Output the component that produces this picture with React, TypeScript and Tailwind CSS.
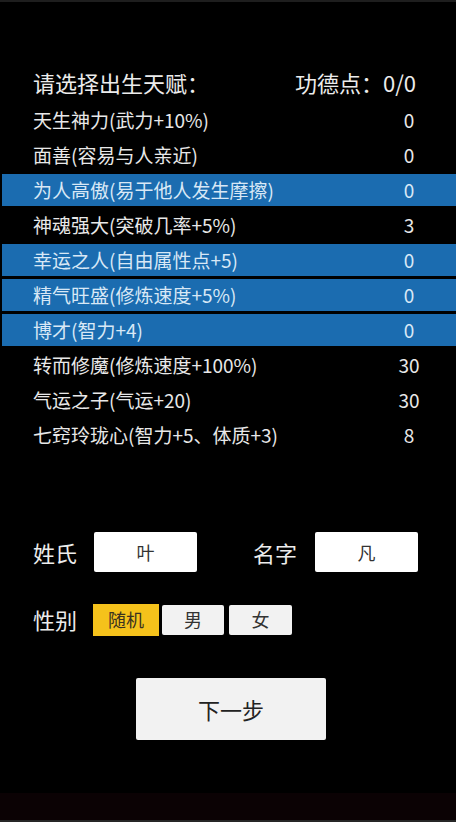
import { useState } from 'react';

// 出生天赋选择界面

const talents = [
  { name: '天生神力(武力+10%)', cost: 0, selected: false },
  { name: '面善(容易与人亲近)', cost: 0, selected: false },
  { name: '为人高傲(易于他人发生摩擦)', cost: 0, selected: true },
  { name: '神魂强大(突破几率+5%)', cost: 3, selected: false },
  { name: '幸运之人(自由属性点+5)', cost: 0, selected: true },
  { name: '精气旺盛(修炼速度+5%)', cost: 0, selected: true },
  { name: '博才(智力+4)', cost: 0, selected: true },
  { name: '转而修魔(修炼速度+100%)', cost: 30, selected: false },
  { name: '气运之子(气运+20)', cost: 30, selected: false },
  { name: '七窍玲珑心(智力+5、体质+3)', cost: 8, selected: false },
];

const font = { fontFamily: '"Noto Sans CJK SC", "Noto Sans", sans-serif' };

export default function App() {
  const [gender, setGender] = useState('随机');

  return (
    <div className="flex h-[822px] w-[456px] flex-col overflow-hidden bg-black" style={font}>
      <div className="h-[2px] bg-[#1e1e1e]" />

      {/* 标题 */}
      <div className="mt-[60px] flex h-[40px] items-center justify-between pl-[33px] pr-[40px] text-[22px] text-[#ececec]">
        <span>请选择出生天赋：</span>
        <span>功德点：0/0</span>
      </div>

      {/* 天赋列表 */}
      <div className="ml-[2px] flex flex-col">
        {talents.map((t) => (
          <div key={t.name} className="h-[35px] pt-[2px]">
            <div
              className={`flex h-[32px] items-center pl-[31px] pr-[22px] text-[19px] ${
                t.selected ? 'bg-[#1b6cb0] text-[#d8e8f6]' : 'text-[#e8e8e8]'
              }`}
            >
              <span className="flex-1">{t.name}</span>
              <span className="w-[50px] text-center">{t.cost}</span>
            </div>
          </div>
        ))}
      </div>

      {/* 姓名 */}
      <div className="mt-[80px] flex items-center pl-[33px]">
        <span className="w-[61px] text-[22px] text-[#ececec]">姓氏</span>
        <div className="flex h-[40px] w-[103px] items-center justify-center rounded-[2px] bg-white text-[18px] text-[#333]">
          叶
        </div>
        <span className="ml-[56px] w-[62px] text-[22px] text-[#ececec]">名字</span>
        <div className="flex h-[40px] w-[103px] items-center justify-center rounded-[2px] bg-white text-[18px] text-[#333]">
          凡
        </div>
      </div>

      {/* 性别 */}
      <div className="mt-[31px] flex items-center pl-[33px]">
        <span className="w-[60px] text-[22px] text-[#ececec]">性别</span>
        <button
          onClick={() => setGender('随机')}
          className={`flex h-[32px] w-[66px] items-center justify-center text-[18px] text-[#3a3220] ${
            gender === '随机' ? 'bg-[#f5c21b]' : 'rounded-[2px] bg-[#f2f2f2]'
          }`}
        >
          随机
        </button>
        <button
          onClick={() => setGender('男')}
          className={`ml-[3px] flex h-[30px] w-[62px] items-center justify-center rounded-[2px] text-[18px] text-[#333] ${
            gender === '男' ? 'bg-[#f5c21b]' : 'bg-[#f2f2f2]'
          }`}
        >
          男
        </button>
        <button
          onClick={() => setGender('女')}
          className={`ml-[5px] flex h-[30px] w-[63px] items-center justify-center rounded-[2px] text-[18px] text-[#333] ${
            gender === '女' ? 'bg-[#f5c21b]' : 'bg-[#f2f2f2]'
          }`}
        >
          女
        </button>
      </div>

      {/* 下一步 */}
      <div className="mt-[42px] pl-[136px]">
        <button className="flex h-[62px] w-[190px] items-center justify-center rounded-[2px] bg-[#f2f2f2] text-[22px] text-[#222]">
          下一步
        </button>
      </div>

      <div className="mt-auto h-[29px] border-b-2 border-[#262626] bg-[#0b0204]" />
    </div>
  );
}
